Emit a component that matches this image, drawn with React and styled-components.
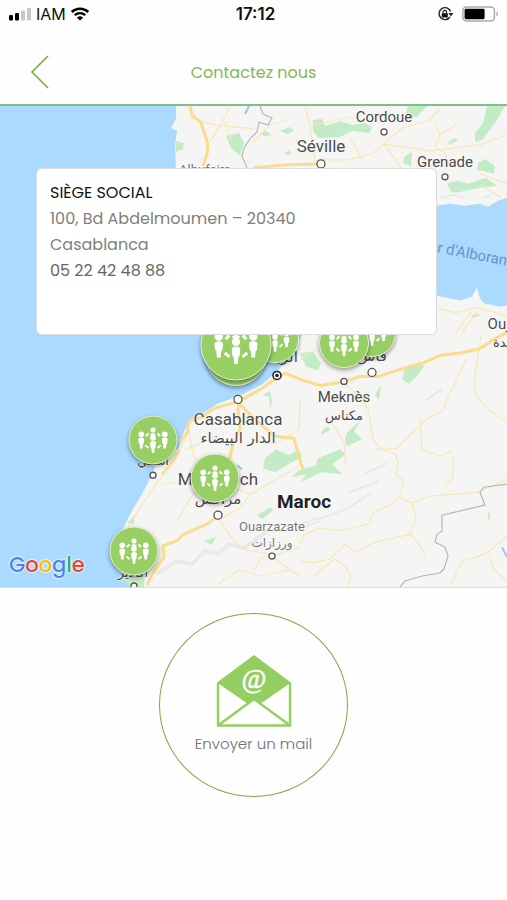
import React from 'react'
import styled, { createGlobalStyle } from 'styled-components'

// the part of the map that is drawn, in map units
const VIEW = { top: 106, width: 507, height: 482 }

const left = (x) => `${(x / VIEW.width) * 100}%`
const top = (y) => `${((y - VIEW.top) / VIEW.height) * 100}%`

const cities = [
  { name: 'Cordoue', x: 384, y: 117, size: 15 },
  { name: 'Séville', x: 321, y: 146, size: 17 },
  { name: 'Grenade', x: 445, y: 162, size: 15 },
  { name: 'Albufeira', x: 205, y: 169, size: 13, color: '#777' },
  { name: 'Casablanca', x: 238, y: 420, size: 17 },
  { name: 'الدار البيضاء', x: 238, y: 439, size: 15, arabic: true },
  { name: 'Marrakech', x: 218, y: 480, size: 17 },
  { name: 'مراكش', x: 218, y: 500, size: 15, arabic: true },
  { name: 'Meknès', x: 344, y: 398, size: 15 },
  { name: 'مكناس', x: 344, y: 416, size: 13, arabic: true },
  { name: 'الرباط', x: 278, y: 358, size: 15, arabic: true },
  { name: 'فاس', x: 372, y: 357, size: 15, arabic: true },
  { name: 'آسفي', x: 153, y: 461, size: 13, arabic: true },
  { name: 'أكادير', x: 133, y: 573, size: 13, arabic: true },
  { name: 'Oujda', x: 507, y: 324, size: 15 },
  { name: 'وجدة', x: 507, y: 342, size: 13, arabic: true },
  { name: 'Ouarzazate', x: 272, y: 527, size: 13, color: '#777' },
  { name: 'ورزازات', x: 272, y: 544, size: 12, arabic: true, color: '#777' },
  { name: 'Maroc', x: 304, y: 502, size: 19, bold: true, color: '#222' },
]

const dots = [
  [384, 132, 3], [321, 164, 4], [445, 177, 3], [238, 400, 4], [153, 476, 3],
  [218, 516, 4], [344, 382, 3], [372, 373, 4], [272, 557, 3], [134, 587, 3],
]

const pins = [
  { id: 'rabat', x: 275, y: 339, size: 48 },
  { id: 'fes', x: 372, y: 333, size: 48 },
  { id: 'meknes', x: 344, y: 343, size: 50 },
  { id: 'casa-sud', x: 236, y: 356, size: 62 },
  { id: 'casa', x: 236, y: 345, size: 71 },
  { id: 'safi', x: 153, y: 441, size: 49 },
  { id: 'marrakech', x: 215, y: 479, size: 49 },
  { id: 'agadir', x: 134, y: 552, size: 49 },
]

const StatusIcons = () => (
  <StatusRight>
    <svg width="17" height="16" viewBox="0 0 17 16">
      <path d="M13 11A6 6 0 1 1 13.6 5.400" fill="none" stroke="#222" strokeWidth="1.400" />
      <path d="M11.400 7h5l-2.500 3.600z" fill="#222" />
      <rect x="4.800" y="7.200" width="6" height="4.400" rx="0.600" fill="#111" />
      <path d="M6 7.600V6.200a1.800 1.800 0 0 1 3.600 0v1.400" fill="none" stroke="#111" strokeWidth="1.100" />
    </svg>
    <svg width="37" height="16" viewBox="0 0 37 16">
      <rect x="0.900" y="0.900" width="31.500" height="14" rx="3.600" fill="#fff" stroke="#aaa" strokeWidth="1.500" />
      <rect x="2.600" y="2.800" width="20" height="10.400" rx="1.400" fill="#000" />
      <path d="M34.500 5.600c2 .6 2 4.200 0 4.800z" fill="#aaa" />
    </svg>
  </StatusRight>
)

const StatusNetwork = () => (
  <StatusLeft>
    <svg width="24" height="14" viewBox="0 0 24 14">
      <rect x="1" y="8" width="4" height="5.500" rx="1.200" fill="#000" />
      <rect x="7" y="6" width="4" height="7.500" rx="1.200" fill="#000" />
      <rect x="13" y="3.500" width="4" height="10" rx="1.200" fill="#c8c8c8" />
      <rect x="19" y="0.800" width="4" height="12.700" rx="1.200" fill="#c8c8c8" />
    </svg>
    <span>IAM</span>
    <svg width="20" height="14" viewBox="0 0 20 14">
      <path d="M1.700 5a12 12 0 0 1 16.600 0" fill="none" stroke="#000" strokeWidth="2.500" />
      <path d="M4.800 8.200a7.600 7.600 0 0 1 10.400 0" fill="none" stroke="#000" strokeWidth="2.300" />
      <path d="M10 13.600L7 10.700a4.300 4.300 0 0 1 6 0z" fill="#000" />
    </svg>
  </StatusLeft>
)

const PinIcon = () => (
  <svg width="100%" height="100%" viewBox="0 0 48 48" fill="#fff">
    <circle cx="24" cy="13.800" r="2.600" />
    <path d="M21.200 18q2.800-2 5.600 0l-.6 1.600h-4.400z" />
    <circle cx="24" cy="21.800" r="2.900" />
    <path d="M21 27q0-2 3-2t3 2l-.6 5h-.7l-.5 5.300h-2.400l-.5-5.300h-.7z" />
    <circle cx="12" cy="18.200" r="2.900" />
    <path d="M9 23.400q0-2 3-2t3 2l-.5 4.200-.8.600-.4 4.500h-2.600l-.4-4.500-.8-.6z" />
    <circle cx="36" cy="18.200" r="2.900" />
    <path d="M33 23.400q0-2 3-2t3 2l-.5 4.200-.8.600-.4 4.500h-2.600l-.4-4.500-.8-.6z" />
    <path
      d="M16.700 20l2.700-2.700M31.300 20l-2.700-2.700M16.200 29.500l3.200 2.800M31.800 29.500l-3.200 2.800"
      stroke="#fff"
      strokeWidth="2"
    />
  </svg>
)

const MapDrawing = () => (
  <MapSvg viewBox={`0 ${VIEW.top} ${VIEW.width} ${VIEW.height}`} preserveAspectRatio="none">
    {/* land */}
    <g fill="#f5f5f4">
      <path d="M176 106V119L171 128 177 131 175 145 176 170 185 178 225 176 250 190 265 206 310 215 340 206 435 206 450 204 465 206 480 204 488 207 498 201 507 198V106Z" />
      <path d="M507 306L500 307 484 304 480 299 477 288 472 297 460 301 436 296 400 300 340 300 320 305 303 334 294 350 278 371 262 385 240 396 218 404 203 414 190 420 183 435 179 449 157 461 152 476 143 493 130 515 123 530 119 550 119 570 130 588H507Z" />
    </g>
    {/* forests and parks */}
    <g fill="#c3ebc6">
      <path d="M226 136L239 133 244 143 240 156 231 148Z" />
      <path d="M176 141L184 143 183 149 176 152Z" />
      <path d="M313 120L322 119 325 126 340 121 352 125 365 123 372 127 370 133 352 131 340 137 318 138 313 131Z" />
      <path d="M280 131L290 127 294 131 288 134Z" />
      <path d="M260 133L266 131 272 135 264 136Z" />
      <path d="M284 153L290 150 291 154 286 155Z" />
      <path d="M408 106H427L417 117 405 116Z" />
      <path d="M487 106H505L497 120 482 140 475 142 475 133 483 123Z" />
      <path d="M448 142L455 138 458 140 450 145Z" />
      <path d="M404 157L412 152 411 166 403 163Z" />
      <path d="M478 163L485 159 495 166 494 174 477 170Z" />
      <path d="M447 184L457 181 468 184 486 178 497 186 480 188 461 192 452 193Z" />
      <path d="M300 354L313 352 321 364 318 371 306 367Z" />
      <path d="M405 368L420 362 424 367 417 377 409 384 402 380Z" />
      <path d="M375 395L381 386 379 401Z" />
      <path d="M263 396L270 391 272 402 270 410 269 397Z" />
      <path d="M322 431L328 427 330 431 321 436Z" />
      <path d="M348 432L361 421 354 432 362 440 347 447 345 439Z" />
      <path d="M265 459L276 450 289 456 299 450 302 458 290 464 275 473 263 469Z" />
      <path d="M318 459L340 450 346 455 332 465 342 475 321 473 301 483 306 475 291 478 299 471 316 466Z" />
      <path d="M257 516L270 508 273 511 262 520Z" />
      <path d="M204 542L216 538 212 546Z" />
      <path d="M131 520L135 515 134 525 127 524Z" />
      <path d="M120 578L145 575 144 588 130 588Z" />
      <path d="M488 511L490 516 490 521 488 520Z" />
      <path d="M470 316L476 314 481 316 474 318Z" />
    </g>
    {/* mountain shading */}
    <g fill="none" stroke="#e4e5e6" strokeWidth="2" opacity="0.7">
      <path d="M156 575L177 562 192 565 205 552 218 555 229 545 244 549 267 532" strokeWidth="4" />
      <path d="M284 531L300 525 316 520 333 515 350 508 371 494" />
      <path d="M365 474L387 464M426 401L442 390M350 493L378 482" />
      <path d="M440 198L452 195 465 198M483 198L490 196M303 528L320 522" />
    </g>
    {/* small roads */}
    <g fill="none" stroke="#f9e7b4" strokeWidth="1.200" strokeLinejoin="round">
      <path d="M230 106L222 122 210 142M190 118L215 125 254 129M225 122L231 140" />
      <path d="M305 106L310 126 315 162M320 160L348 160 372 154 384 144 402 128 430 120 440 108M384 144L392 155 402 170" />
      <path d="M435 122L440 135 435 147 445 153 450 165M440 135L458 123M384 144L430 151 480 145 507 135M480 174L507 184" />
      <path d="M253 143L270 125 290 119M310 126L350 117M480 185L501 198M350 138L362 160" />
      <path d="M436 309L456 313 477 308 507 316M456 333L471 312M462 333L477 312" />
      <path d="M481 336L474 383 476 397 488 410 507 423M466 360L460 374 447 400 443 411 425 421 397 449 376 450" />
      <path d="M344 384L362 399 368 410 373 440 380 449 395 455 398 464 396 475 404 482 400 496 390 506 374 513 370 524 350 530 337 531 319 529 304 536 300 545" />
      <path d="M400 498L412 504 430 497 478 493 507 480M412 504L416 519 412 530 407 537" />
      <path d="M355 553L375 543 411 535 421 548 426 558M300 562L312 564 330 560 345 545 355 553M313 578L328 565 335 560 345 567 351 577 348 587" />
      <path d="M450 587L462 562 475 558 487 554 507 537M489 554L493 570 507 582" />
      <path d="M185 440L176 460 156 485 139 510 126 532M188 424L193 455 200 466M162 486L184 481M178 520L190 500 205 480M145 532L150 560" />
      <path d="M230 488L251 495 276 480 299 468M250 440L275 445 299 430M250 495L240 509 220 520M300 400L299 430M185 450L215 438" />
      <path d="M218 518L232 540 245 551 272 555 260 560 254 572M272 557L290 571 300 577M218 585L240 571 260 577 290 571" />
      <path d="M272 557L300 548M420 420L422 450 440 457 453 452M453 457L453 478 445 488M330 420L345 445 345 465M300 360L315 350 340 360" />
    </g>
    {/* motorways */}
    <g fill="none" stroke="#fbdc8c" strokeWidth="3" strokeLinejoin="round">
      <path d="M190 106L192 115 201 123 208 144 207 154 203 166" />
      <path d="M253 168L285 165 317 164" />
      <path d="M507 333L495 339 480 349 463 353 440 356 424 363 397 371 379 377 360 377 346 382 320 386 300 380 286 374 277 378 262 389 239 402 214 409 203 417 189 422 187 434 180 442" />
      <path d="M239 402L238 410 240 430 233 445 229 461M240 405L255 420 275 437 294 439 299 458 303 470" />
      <path d="M218 517L207 525 182 536 178 541 163 547 164 558 153 574 147 586" />
      <path d="M179 451L175 459 162 475" strokeWidth="2" />
    </g>
    {/* rivers and borders */}
    <path d="M249 106L245 114M237 466L242 470M502 548L507 558" fill="none" stroke="#9ac8f5" strokeWidth="2" />
    <g fill="none" stroke="#b4b7ba" strokeWidth="1.200">
      <path d="M507 485L484 488 480 493 485 506 442 516 442 532 437 535 435 543 445 548 448 557 444 570 440 574 422 577 405 582 400 588" />
      <path d="M260 106L263 114 272 118 268 125 259 122 257 132 250 139 244 148 242 156 247 168" />
    </g>
    {dots.map(([x, y, r]) => (
      <circle key={`${x}-${y}`} cx={x} cy={y} r={r} fill="#fff" stroke="#555" strokeWidth="1.300" />
    ))}
    <circle cx="277" cy="376" r="4" fill="#fff" stroke="#222" strokeWidth="1.600" />
    <circle cx="277" cy="376" r="1.800" fill="#222" />
  </MapSvg>
)

const MailIcon = () => (
  <svg width="76" height="74" viewBox="0 0 76 74">
    <path d="M2 29.500L38 53 74 29.500V72H2z" fill="#fff" />
    <path d="M1 28.500L38 1 75 28.500 44 50 38 45.500 32 50z" fill="#93cf60" />
    <path d="M2 29V71.500H74V29" fill="none" stroke="#93d060" strokeWidth="2.400" />
    <path d="M2 71.500L38 45 74 71.500" fill="none" stroke="#93d060" strokeWidth="2.600" />
    <text
      x="38"
      y="34"
      textAnchor="middle"
      fontFamily="Liberation Serif, serif"
      fontSize="27"
      fill="#fff"
      stroke="#fff"
      strokeWidth="0.600"
    >
      @
    </text>
  </svg>
)

const App = () => {
  return (
    <>
      <GlobalStyle />
      <Page>
        <StatusBar>
          <StatusNetwork />
          <Clock>17:12</Clock>
          <StatusIcons />
        </StatusBar>
        <Header>
          <BackButton type="button" aria-label="Retour">
            <svg width="20" height="34" viewBox="0 0 20 34">
              <path d="M18 1L2 17 18 33" fill="none" stroke="#7bb143" strokeWidth="1.700" />
            </svg>
          </BackButton>
          <Title>Contactez nous</Title>
        </Header>
        <MapArea>
          <MapDrawing />
          <SeaLabel>Mer d'Alboran</SeaLabel>
          {cities.map((city) => (
            <CityLabel
              key={city.name}
              $x={city.x}
              $y={city.y}
              $size={city.size}
              $color={city.color}
              $bold={city.bold}
              $arabic={city.arabic}
            >
              {city.name}
            </CityLabel>
          ))}
          {pins.map((pin) => (
            <Pin key={pin.id} type="button" aria-label={pin.id} $x={pin.x} $y={pin.y} $size={pin.size}>
              <PinIcon />
            </Pin>
          ))}
          <GoogleLogo>
            <Letter $color="#4285f4">G</Letter>
            <Letter $color="#ea4335">o</Letter>
            <Letter $color="#fbbc05">o</Letter>
            <Letter $color="#4285f4">g</Letter>
            <Letter $color="#34a853">l</Letter>
            <Letter $color="#ea4335">e</Letter>
          </GoogleLogo>
          <AddressCard>
            <AddressTitle>SIÈGE SOCIAL</AddressTitle>
            <AddressLine>100, Bd Abdelmoumen – 20340</AddressLine>
            <AddressLine>Casablanca</AddressLine>
            <AddressPhone>05 22 42 48 88</AddressPhone>
          </AddressCard>
        </MapArea>
        <MailSection>
          <MailButton type="button">
            <MailIcon />
            <MailText>Envoyer un mail</MailText>
          </MailButton>
        </MailSection>
      </Page>
    </>
  )
}

export default App

const GlobalStyle = createGlobalStyle`
  * {
    box-sizing: border-box;
  }

  body {
    margin: 0;
    background: #fefefe;
    font-family: Poppins, Inter, sans-serif;
  }
`

const Page = styled.div`
  display: flex;
  flex-direction: column;
  min-height: 100vh;
  overflow: hidden;
`

const StatusBar = styled.div`
  display: grid;
  grid-template-columns: 1fr auto 1fr;
  align-items: center;
  height: 28px;
  margin-bottom: 12px;
  padding: 0 8px;
  color: #111;
`

const StatusLeft = styled.div`
  display: flex;
  align-items: center;
  gap: 4px;
  font-family: Inter, sans-serif;
  font-size: 16px;
`

const StatusRight = styled.div`
  display: flex;
  align-items: center;
  justify-content: flex-end;
  gap: 8px;
`

const Clock = styled.span`
  padding-left: 4px;
  font-family: Inter, sans-serif;
  font-size: 17px;
  font-weight: 600;
`

const Header = styled.header`
  display: grid;
  grid-template-columns: 60px 1fr 60px;
  align-items: center;
  height: 66px;
  border-bottom: 2px solid #7fbf85;
`

const BackButton = styled.button`
  display: flex;
  justify-content: flex-end;
  padding: 0 10px 0 0;
  border: none;
  background: none;
  cursor: pointer;
`

const Title = styled.h1`
  margin: 0;
  color: #86b653;
  font-size: 16px;
  font-weight: 400;
  text-align: center;
`

const MapArea = styled.section`
  position: relative;
  width: 100%;
  aspect-ratio: 507 / 482;
  overflow: hidden;
  background: #aadaff;
  border-bottom: 1px solid #ddd;
`

const MapSvg = styled.svg`
  display: block;
  width: 100%;
  height: 100%;
`

const CityLabel = styled.span`
  position: absolute;
  left: ${({ $x }) => left($x)};
  top: ${({ $y }) => top($y)};
  transform: translate(-50%, -50%);
  color: ${({ $color }) => $color || '#4a4a4a'};
  font-family: ${({ $arabic }) => ($arabic ? '"DejaVu Sans"' : 'Roboto')}, sans-serif;
  font-size: ${({ $size }) => $size}px;
  font-weight: ${({ $bold }) => ($bold ? 700 : 400)};
  line-height: 1;
  white-space: nowrap;
  text-shadow: 0 0 2px #fff, 0 0 2px #fff;
`

const SeaLabel = styled.span`
  position: absolute;
  left: ${left(462)};
  top: ${top(252)};
  transform: translate(-50%, -50%) rotate(11deg);
  color: #6495cf;
  font-family: Roboto, sans-serif;
  font-size: 15px;
  white-space: nowrap;
`

const Pin = styled.button`
  position: absolute;
  left: ${({ $x }) => left($x)};
  top: ${({ $y }) => top($y)};
  width: ${({ $size }) => $size}px;
  height: ${({ $size }) => $size}px;
  transform: translate(-50%, -50%);
  padding: 0;
  border: 1px solid #e4f3d8;
  border-radius: 50%;
  background: #97cf65;
  box-shadow: 0 2px 4px rgba(0, 0, 0, 0.4);
  cursor: pointer;
`

const GoogleLogo = styled.div`
  position: absolute;
  left: 9px;
  bottom: 6px;
  font-family: Poppins, Lato, sans-serif;
  font-size: 21px;
  font-weight: 500;
  line-height: 32px;
`

const Letter = styled.span`
  color: ${({ $color }) => $color};
  text-shadow: 0 0 2px #fff, 0 0 2px #fff, 0 0 2px #fff;
`

const AddressCard = styled.article`
  position: absolute;
  top: 62px;
  left: 36px;
  right: 70px;
  min-height: 167px;
  padding: 11px 13px;
  border: 1px solid #ddd;
  border-radius: 6px;
  background: #fff;
  font-size: 16px;
  line-height: 26px;
`

const AddressTitle = styled.h2`
  margin: 0;
  color: #111;
  font-size: 16px;
  font-weight: 400;
`

const AddressLine = styled.p`
  margin: 0;
  color: #808080;
`

const AddressPhone = styled.p`
  margin: 0;
  color: #666;
`

const MailSection = styled.section`
  display: flex;
  justify-content: center;
  padding: 25px 0;
`

const MailButton = styled.button`
  display: flex;
  flex-direction: column;
  align-items: center;
  justify-content: center;
  gap: 4px;
  width: 189px;
  height: 184px;
  padding: 0;
  border: 1px solid #79ab45;
  border-radius: 50%;
  background: none;
  cursor: pointer;
`

const MailText = styled.span`
  color: #707070;
  font-family: Poppins, Inter, sans-serif;
  font-size: 15px;
  font-weight: 300;
  line-height: 24px;
`
